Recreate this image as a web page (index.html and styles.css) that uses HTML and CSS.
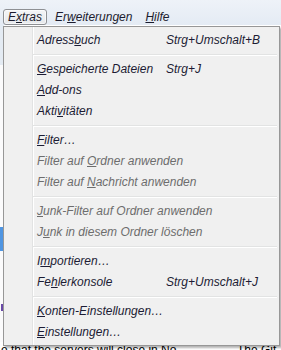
FILE: index.html
```html
<html lang="de">
<head>
    <meta charset="UTF-8">
    <title>Extras</title>
    <link rel="stylesheet" href="styles.css">
</head>
<body>
    <div class="window">
        <div class="menubar">
            <span class="mb-item open">E<u>x</u>tras</span>
            <span class="mb-item">Er<u>w</u>eiterungen</span>
            <span class="mb-item"><u>H</u>ilfe</span>
        </div>

        <div class="content">
            <div class="folders">
                <div class="folder-head"></div>
                <div class="folder-row sel"></div>
                <div class="folder-row mark"></div>
            </div>
            <div class="status">
                <span class="msg subject">e that the servers will close in No...</span>
                <span class="msg">The Git</span>
            </div>
        </div>

        <div class="popup">
            <div class="item"><span class="label">Adress<u>b</u>uch</span><span class="key">Strg+Umschalt+B</span></div>
            <div class="sep"></div>
            <div class="item"><span class="label"><u>G</u>espeicherte Dateien</span><span class="key">Strg+J</span></div>
            <div class="item"><span class="label"><u>A</u>dd-ons</span></div>
            <div class="item"><span class="label">Akti<u>v</u>itäten</span></div>
            <div class="sep"></div>
            <div class="item"><span class="label"><u>F</u>ilter…</span></div>
            <div class="item off"><span class="label">Filter auf <u>O</u>rdner anwenden</span></div>
            <div class="item off"><span class="label">Filter auf <u>N</u>achricht anwenden</span></div>
            <div class="sep"></div>
            <div class="item off"><span class="label"><u>J</u>unk-Filter auf Ordner anwenden</span></div>
            <div class="item off"><span class="label">J<u>u</u>nk in diesem Ordner löschen</span></div>
            <div class="sep"></div>
            <div class="item"><span class="label">I<u>m</u>portieren…</span></div>
            <div class="item"><span class="label">Fe<u>h</u>lerkonsole</span><span class="key">Strg+Umschalt+J</span></div>
            <div class="sep"></div>
            <div class="item"><span class="label"><u>K</u>onten-Einstellungen…</span></div>
            <div class="item"><span class="label"><u>E</u>instellungen…</span></div>
        </div>
    </div>
</body>
</html>
```

FILE: styles.css
```css
body {
    margin: 0;
    font-family: "Liberation Sans", Arial, sans-serif;
    font-size: 12px;
    background: #ffffff;
}
.window {
    position: relative;
    width: 281px;
    height: 350px;
    overflow: hidden;
    display: flex;
    flex-direction: column;
}
.menubar {
    height: 26px;
    box-sizing: border-box;
    padding: 9px 0 0 3px;
    display: flex;
    gap: 3px;
    background: linear-gradient(#eef2f8, #e4ebf4);
}
.mb-item {
    height: 16px;
    line-height: 15px;
    padding: 0 4px;
    border: 1px solid transparent;
    box-sizing: border-box;
    font-style: italic;
    color: #1c1c2e;
}
.mb-item.open {
    border-color: #8e9094;
    border-radius: 3px;
    background: linear-gradient(#f4f5f7, #e6e8eb);
    box-shadow: inset 0 0 0 1px rgba(255, 255, 255, 0.6);
}

.content {
    flex: 1;
    display: flex;
    flex-direction: column;
}
.folders {
    height: 317px;
    display: flex;
    flex-direction: column;
    width: 4px;
    background: #fbfbfc;
}
.folder-head {
    height: 40px;
    background: #e4ebf3;
}
.folder-row {
    height: 24px;
}
.folder-row.sel {
    margin-top: 162px;
    background: #4f95e2;
}
.folder-row.mark {
    margin-top: 53px;
    height: 7px;
    background: linear-gradient(to right, #fbfbfc 1px, #6a4aa8 1px);
}
.status {
    display: flex;
    margin-top: 1px;
    line-height: 14px;
    color: #000000;
    white-space: nowrap;
}
.status .subject {
    flex: 0 0 236px;
    padding-left: 1px;
}

.popup {
    position: absolute;
    top: 26px;
    left: 3px;
    width: 277px;
    box-sizing: border-box;
    padding: 3px 2px 2px 2px;
    border: 1px solid #979797;
    background-color: #f0f0f0;
    background-image: linear-gradient(to right, transparent 28px, #e2e3e3 28px, #e2e3e3 29px, #ffffff 29px, #ffffff 30px, transparent 30px);
    box-shadow: 2px 2px 2px rgba(0, 0, 0, 0.3);
}
.item {
    height: 21px;
    line-height: 21px;
    padding-left: 31px;
    display: flex;
    font-style: italic;
    color: #1c1c34;
    white-space: nowrap;
}
.item .label {
    flex: 0 0 129px;
}
.item.off {
    color: #6d6d6d;
}
.sep {
    height: 8px;
    margin-left: 27px;
    background: linear-gradient(transparent 3px, #e2e3e3 3px, #e2e3e3 4px, #ffffff 4px, #ffffff 5px, transparent 5px);
}
```
